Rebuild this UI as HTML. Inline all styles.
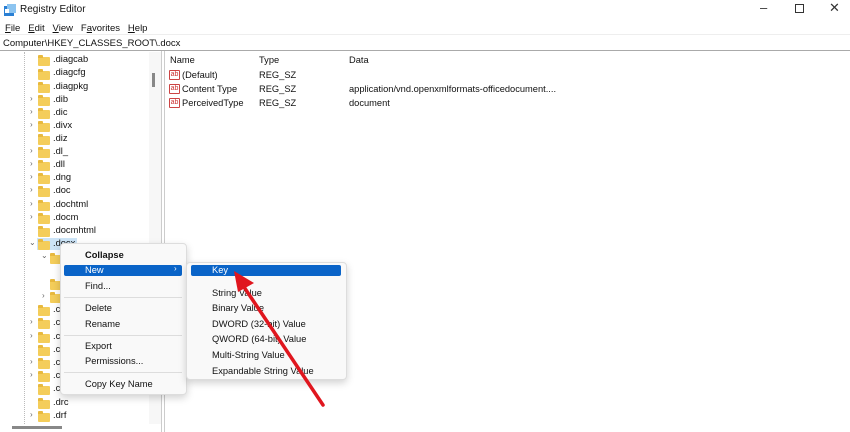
<!DOCTYPE html><html><head><style>
*{margin:0;padding:0;box-sizing:border-box}
body{width:850px;height:432px;overflow:hidden;background:#fff;font-family:"Liberation Sans",sans-serif;font-size:9.3px;color:#111;position:relative}
.a{position:absolute;white-space:nowrap}
.f{position:absolute;width:12px;height:9px;background:#f4cd5a;border-radius:1px}
.f:before{content:"";position:absolute;left:0;top:-2px;width:5px;height:3px;background:#e8b93e;border-radius:1px 1px 0 0}
.e{position:absolute;font-size:8px;color:#666}
.ab{position:absolute;width:11px;height:10px;border:1px solid #c44;border-radius:1px;font-size:7px;color:#c33;line-height:8px;text-align:center}
.m{position:absolute;background:#f9f9f9;border:1px solid #ddd;border-radius:4px;box-shadow:0 3px 8px rgba(0,0,0,.18)}
.hl{position:absolute;background:#0a64c8;border-radius:2px}
.sep{position:absolute;height:1px;background:#ddd}
</style></head><body>
<svg class="a" style="left:4px;top:4px" width="12" height="12"><rect x="0" y="2" width="10" height="10" fill="#2a7fd4"/><rect x="3" y="0" width="9" height="9" fill="#8cc4f0"/><rect x="1" y="5" width="4" height="4" fill="#fff"/></svg>
<div class="a" style="left:20px;top:4px;font-size:10px">Registry Editor</div>
<div class="a" style="left:760px;top:0px;font-size:13px;color:#333">–</div>
<div class="a" style="left:795px;top:4px;width:9px;height:9px;border:1px solid #333"></div>
<div class="a" style="left:829px;top:0px;font-size:13px;color:#333">✕</div>
<div class="a" style="left:5px;top:23px;font-size:9.5px"><u>F</u>ile&nbsp;&nbsp;&nbsp;<u>E</u>dit&nbsp;&nbsp;&nbsp;<u>V</u>iew&nbsp;&nbsp;&nbsp;F<u>a</u>vorites&nbsp;&nbsp;&nbsp;<u>H</u>elp</div>
<div class="a" style="left:0;top:34px;width:850px;height:1px;background:#eee"></div>
<div class="a" style="left:3px;top:38px;font-size:9.5px">Computer\HKEY_CLASSES_ROOT\.docx</div>
<div class="a" style="left:0;top:50px;width:850px;height:1px;background:#aaa"></div>
<div class="a" style="left:149px;top:52px;width:12px;height:372px;background:#f7f7f7"></div>
<div class="a" style="left:152px;top:73px;width:3px;height:14px;background:#888"></div>
<div class="a" style="left:161px;top:51px;width:1px;height:381px;background:#ccc"></div>
<div class="a" style="left:164px;top:51px;width:1px;height:381px;background:#ccc"></div>
<div class="a" style="left:12px;top:426px;width:50px;height:3px;background:#888"></div>
<div class="a" style="left:170px;top:55px">Name</div><div class="a" style="left:259px;top:55px">Type</div><div class="a" style="left:349px;top:55px">Data</div>
<div class="ab" style="left:169px;top:70px">ab</div><div class="a" style="left:182px;top:70px">(Default)</div><div class="a" style="left:259px;top:70px">REG_SZ</div>
<div class="ab" style="left:169px;top:84px">ab</div><div class="a" style="left:182px;top:84px">Content Type</div><div class="a" style="left:259px;top:84px">REG_SZ</div><div class="a" style="left:349px;top:84px">application/vnd.openxmlformats-officedocument....</div>
<div class="ab" style="left:169px;top:98px">ab</div><div class="a" style="left:182px;top:98px">PerceivedType</div><div class="a" style="left:259px;top:98px">REG_SZ</div><div class="a" style="left:349px;top:98px">document</div>
<div class="a" style="left:24px;top:52px;width:1px;height:372px;border-left:1px dotted #bbb"></div>
<div class="a" style="left:37px;top:238px;width:40px;height:12px;background:#cce4f7"></div>
<div class="f" style="left:38px;top:57px"></div><div class="a" style="left:53px;top:54px">.diagcab</div>
<div class="f" style="left:38px;top:71px"></div><div class="a" style="left:53px;top:67px">.diagcfg</div>
<div class="f" style="left:38px;top:84px"></div><div class="a" style="left:53px;top:81px">.diagpkg</div>
<div class="e" style="left:30px;top:94px">›</div><div class="f" style="left:38px;top:97px"></div><div class="a" style="left:53px;top:94px">.dib</div>
<div class="e" style="left:30px;top:107px">›</div><div class="f" style="left:38px;top:110px"></div><div class="a" style="left:53px;top:107px">.dic</div>
<div class="e" style="left:30px;top:120px">›</div><div class="f" style="left:38px;top:123px"></div><div class="a" style="left:53px;top:120px">.divx</div>
<div class="f" style="left:38px;top:136px"></div><div class="a" style="left:53px;top:133px">.diz</div>
<div class="e" style="left:30px;top:146px">›</div><div class="f" style="left:38px;top:149px"></div><div class="a" style="left:53px;top:146px">.dl_</div>
<div class="e" style="left:30px;top:159px">›</div><div class="f" style="left:38px;top:162px"></div><div class="a" style="left:53px;top:159px">.dll</div>
<div class="e" style="left:30px;top:172px">›</div><div class="f" style="left:38px;top:175px"></div><div class="a" style="left:53px;top:172px">.dng</div>
<div class="e" style="left:30px;top:185px">›</div><div class="f" style="left:38px;top:188px"></div><div class="a" style="left:53px;top:185px">.doc</div>
<div class="e" style="left:30px;top:199px">›</div><div class="f" style="left:38px;top:202px"></div><div class="a" style="left:53px;top:199px">.dochtml</div>
<div class="e" style="left:30px;top:212px">›</div><div class="f" style="left:38px;top:215px"></div><div class="a" style="left:53px;top:212px">.docm</div>
<div class="f" style="left:38px;top:228px"></div><div class="a" style="left:53px;top:225px">.docmhtml</div>
<div class="e" style="left:29px;top:238px">⌄</div><div class="f" style="left:38px;top:241px"></div><div class="a" style="left:53px;top:238px">.docx</div>
<div class="e" style="left:41px;top:251px">⌄</div><div class="f" style="left:50px;top:255px"></div>
<div class="f" style="left:50px;top:281px"></div>
<div class="e" style="left:42px;top:291px">›</div><div class="f" style="left:50px;top:294px"></div>
<div class="f" style="left:38px;top:307px"></div><div class="a" style="left:53px;top:304px">.c</div>
<div class="e" style="left:30px;top:317px">›</div><div class="f" style="left:38px;top:320px"></div><div class="a" style="left:53px;top:317px">.c</div>
<div class="e" style="left:30px;top:331px">›</div><div class="f" style="left:38px;top:334px"></div><div class="a" style="left:53px;top:331px">.c</div>
<div class="f" style="left:38px;top:347px"></div><div class="a" style="left:53px;top:344px">.c</div>
<div class="e" style="left:30px;top:357px">›</div><div class="f" style="left:38px;top:360px"></div><div class="a" style="left:53px;top:357px">.c</div>
<div class="e" style="left:30px;top:370px">›</div><div class="f" style="left:38px;top:373px"></div><div class="a" style="left:53px;top:370px">.c</div>
<div class="f" style="left:38px;top:386px"></div><div class="a" style="left:53px;top:383px">.c</div>
<div class="f" style="left:38px;top:400px"></div><div class="a" style="left:53px;top:397px">.drc</div>
<div class="e" style="left:30px;top:410px">›</div><div class="f" style="left:38px;top:413px"></div><div class="a" style="left:53px;top:410px">.drf</div>
<div class="m" style="left:60px;top:243px;width:127px;height:152px"></div>
<div class="a" style="left:85px;top:250px;font-weight:bold">Collapse</div>
<div class="hl" style="left:64px;top:265px;width:118px;height:11px"></div>
<div class="a" style="left:85px;top:265px;color:#fff">New</div><div class="a" style="left:174px;top:264px;color:#fff;font-size:8px">›</div>
<div class="a" style="left:85px;top:281px">Find...</div>
<div class="sep" style="left:64px;top:297px;width:118px"></div>
<div class="a" style="left:85px;top:303px">Delete</div>
<div class="a" style="left:85px;top:319px">Rename</div>
<div class="sep" style="left:64px;top:335px;width:118px"></div>
<div class="a" style="left:85px;top:341px">Export</div>
<div class="a" style="left:85px;top:356px">Permissions...</div>
<div class="sep" style="left:64px;top:372px;width:118px"></div>
<div class="a" style="left:85px;top:379px">Copy Key Name</div>
<div class="m" style="left:186px;top:262px;width:161px;height:118px"></div>
<div class="hl" style="left:191px;top:265px;width:150px;height:11px"></div>
<div class="a" style="left:212px;top:265px;color:#fff">Key</div>
<div class="a" style="left:212px;top:288px">String Value</div>
<div class="a" style="left:212px;top:303px">Binary Value</div>
<div class="a" style="left:212px;top:319px">DWORD (32-bit) Value</div>
<div class="a" style="left:212px;top:334px">QWORD (64-bit) Value</div>
<div class="a" style="left:212px;top:350px">Multi-String Value</div>
<div class="a" style="left:212px;top:366px">Expandable String Value</div>
<svg class="a" style="left:0;top:0" width="850" height="432"><line x1="323" y1="405" x2="244" y2="287" stroke="#e0161e" stroke-width="3.5" stroke-linecap="round"/><polygon points="234,271 254,283 238,292" fill="#e0161e"/></svg>
</body></html>
